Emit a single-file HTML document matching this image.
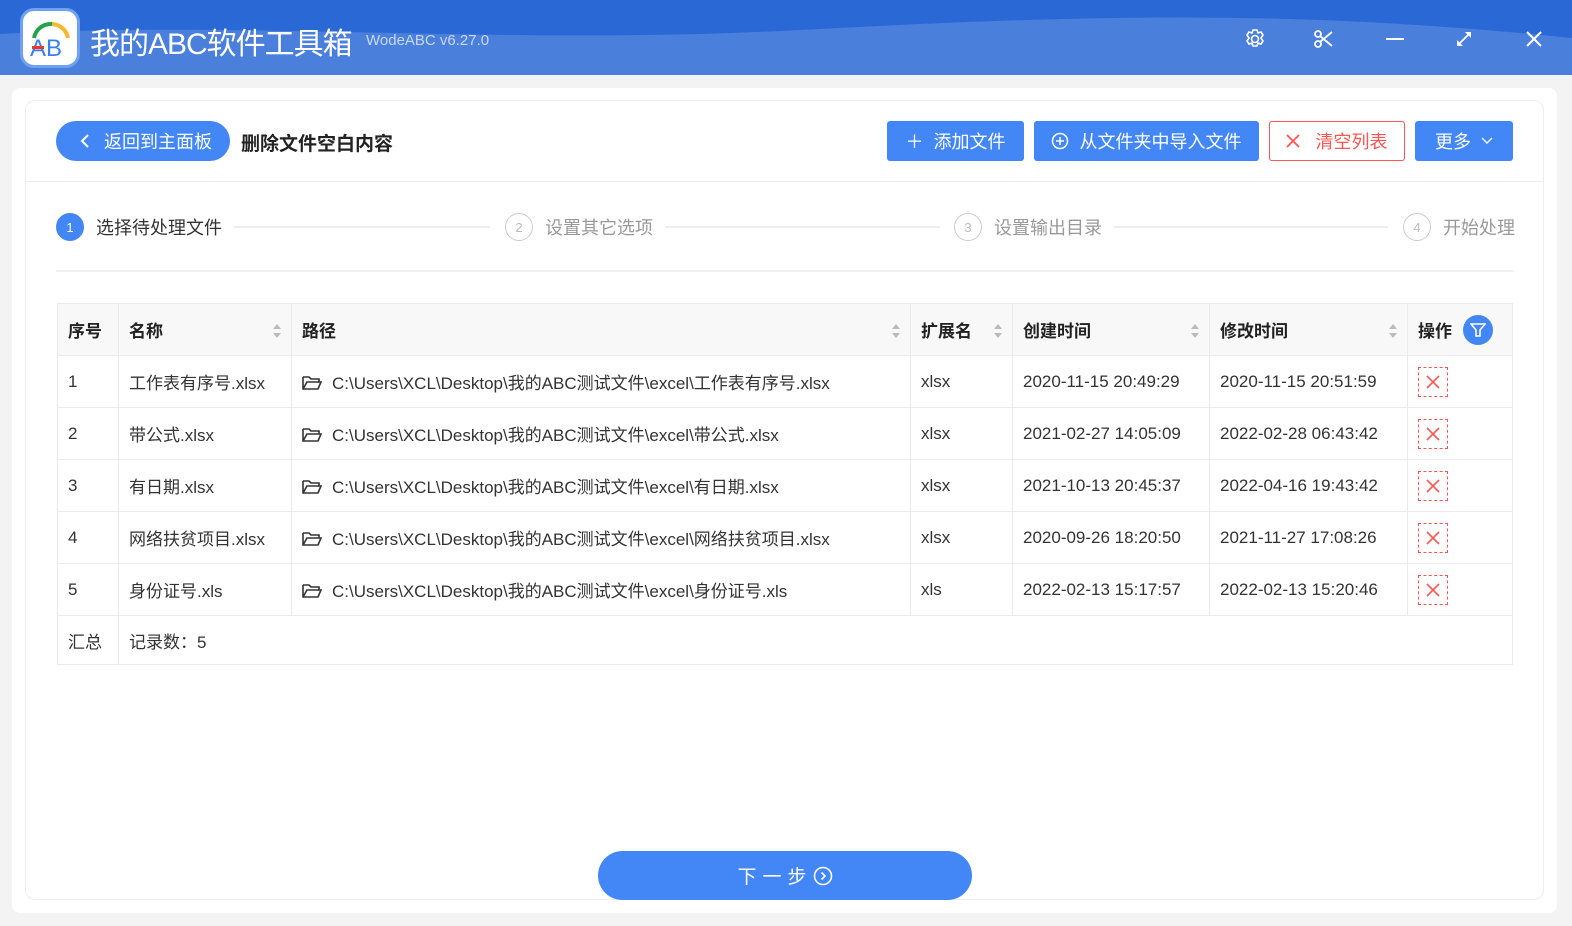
<!DOCTYPE html>
<html><head><meta charset="utf-8"><style>
*{margin:0;padding:0;box-sizing:border-box}
body{width:1572px;height:926px;background:#f3f3f3;font-family:"Liberation Sans","Noto Sans CJK SC",sans-serif;position:relative;overflow:hidden;color:#333}
.a{position:absolute}
.hdr{left:0;top:0;width:1572px;height:75px;background:#4a7fdc;overflow:hidden}
.btn{position:absolute;top:121px;height:40px;background:#4287f5;color:#fff;font-size:18px;display:flex;align-items:center;justify-content:center;border-radius:3px}
.step{font-size:18px;color:#999;top:213px;display:flex;align-items:center;height:28px}
.circ{width:28px;height:28px;border-radius:50%;border:1.5px solid #ccc;color:#bbb;font-size:13px;display:flex;align-items:center;justify-content:center;margin-right:12px}
.line{height:2px;background:#eee;top:226px}
table{position:absolute;left:57px;top:303px;border-collapse:collapse;font-size:17px;width:1456px}
td,th{border:1px solid #ebebeb;padding:0 10px;text-align:left;white-space:nowrap}
th{height:52px;background:#f8f8f8;font-weight:bold;color:#222;position:relative}
td{height:52px;color:#333}
.sort{position:absolute;right:10px;top:19px;width:8px}
.del{width:30px;height:30px;border:1.5px dashed #f55;display:flex;align-items:center;justify-content:center}
</style></head><body>
<div class="a hdr">
 <svg class="a" style="left:0;top:0" width="1572" height="75"><path d="M0 0H1572V38C1300 10 1100 14 800 30 500 46 250 20 0 34Z" fill="#2a68d5"/></svg>
 <div class="a" style="left:20px;top:8px;width:60px;height:60px;border-radius:14px;background:#fff;border:3px solid #6ea2f0"></div>
 <svg class="a" style="left:26px;top:16px" width="50" height="44"><path d="M8 22A17 17 0 0 1 26 8" stroke="#22a34b" stroke-width="4" fill="none"/><path d="M26 8A17 17 0 0 1 42 22" stroke="#f5b82e" stroke-width="4" fill="none"/><text x="4" y="40" font-size="24" font-family="Liberation Sans" fill="#3a80f0">AB</text><rect x="6" y="30" width="12" height="3" fill="#e33"/></svg>
 <div class="a" style="left:90px;top:19px;font-size:30px;color:#fff;letter-spacing:-1px;white-space:nowrap">我的ABC软件工具箱</div>
 <div class="a" style="left:366px;top:32px;font-size:15px;color:#c8d8f5">WodeABC v6.27.0</div>
 <svg class="a" style="left:1244px;top:28px" width="22" height="22" fill="none" stroke="#fff" stroke-width="1.6"><circle cx="11" cy="11" r="3.5"/><path d="M9 2h4l1 3 3-1 2 3-2 3 2 3-2 3-3-1-1 3H9l-1-3-3 1-2-3 2-3-2-3 2-3 3 1z"/></svg>
 <svg class="a" style="left:1314px;top:29px" width="20" height="20" fill="none" stroke="#fff" stroke-width="1.8"><circle cx="4" cy="5" r="3"/><circle cx="4" cy="15" r="3"/><path d="M6 7L18 17M6 13L18 3"/></svg>
 <div class="a" style="left:1386px;top:38px;width:18px;height:2px;background:#fff"></div>
 <svg class="a" style="left:1455px;top:30px" width="18" height="18" stroke="#fff" stroke-width="1.8" fill="#fff"><path d="M3 15L15 3"/><path d="M10 2h6v6z M2 10v6h6z" stroke="none"/></svg>
 <svg class="a" style="left:1526px;top:31px" width="16" height="16" stroke="#fff" stroke-width="2"><path d="M1 1L15 15M15 1L1 15"/></svg>
</div>
<div class="a" style="left:12px;top:88px;width:1545px;height:825px;background:#fff;border-radius:8px"></div>
<div class="a" style="left:25px;top:100px;width:1519px;height:800px;border:1px solid #eee;border-radius:10px"></div>
<div class="a" style="left:25px;top:181px;width:1519px;height:1px;background:#eee"></div>
<div class="a" style="left:56px;top:121px;width:174px;height:40px;background:#4287f5;border-radius:20px;color:#fff;font-size:18px;display:flex;align-items:center;padding-left:22px"><svg width="14" height="16" fill="none" stroke="#fff" stroke-width="2"><path d="M10 2L4 8l6 6"/></svg><span style="margin-left:12px">返回到主面板</span></div>
<div class="a" style="left:241px;top:129px;font-size:19px;font-weight:bold;color:#222">删除文件空白内容</div>
<div class="btn" style="left:887px;width:137px">＋&nbsp; 添加文件</div>
<div class="btn" style="left:1034px;width:225px"><svg width="18" height="18" fill="none" stroke="#fff" stroke-width="1.5"><circle cx="9" cy="9" r="7.5"/><path d="M9 5v8M5 9h8"/></svg>&nbsp; 从文件夹中导入文件</div>
<div class="btn" style="left:1269px;width:136px;background:#fff;border:1.5px solid #f55;color:#f55"><svg width="14" height="14" stroke="#f55" stroke-width="1.8"><path d="M1 1l12 12M13 1L1 13"/></svg>&nbsp;&nbsp; 清空列表</div>
<div class="btn" style="left:1415px;width:98px">更多&nbsp;&nbsp;<svg width="12" height="8" fill="none" stroke="#fff" stroke-width="1.4"><path d="M1 1l5 5 5-5"/></svg></div>
<div class="a step" style="left:56px;color:#333"><div class="circ" style="background:#4287f5;border-color:#4287f5;color:#fff">1</div>选择待处理文件</div>
<div class="a line" style="left:234px;width:256px"></div>
<div class="a step" style="left:505px"><div class="circ">2</div>设置其它选项</div>
<div class="a line" style="left:665px;width:275px"></div>
<div class="a step" style="left:954px"><div class="circ">3</div>设置输出目录</div>
<div class="a line" style="left:1114px;width:274px"></div>
<div class="a step" style="left:1403px"><div class="circ">4</div>开始处理</div>
<div class="a" style="left:56px;top:270px;width:1458px;height:2px;background:#f0f0f0"></div>
<table>
<tr><th style="width:61px">序号</th><th style="width:173px">名称<svg class="sort" height="16"><path d="M0 6l4-5 4 5zM0 10l4 5 4-5z" fill="#bbb"/></svg></th><th style="width:619px">路径<svg class="sort" height="16"><path d="M0 6l4-5 4 5zM0 10l4 5 4-5z" fill="#bbb"/></svg></th><th style="width:102px">扩展名<svg class="sort" height="16"><path d="M0 6l4-5 4 5zM0 10l4 5 4-5z" fill="#bbb"/></svg></th><th style="width:197px">创建时间<svg class="sort" height="16"><path d="M0 6l4-5 4 5zM0 10l4 5 4-5z" fill="#bbb"/></svg></th><th style="width:198px">修改时间<svg class="sort" height="16"><path d="M0 6l4-5 4 5zM0 10l4 5 4-5z" fill="#bbb"/></svg></th><th>操作<span style="position:absolute;left:55px;top:11px;width:30px;height:30px;border-radius:50%;background:#4287f5;display:flex;align-items:center;justify-content:center"><svg width="16" height="16" fill="none" stroke="#fff" stroke-width="1.6"><path d="M1 2h14L10 8v6H6V8z"/></svg></span></th></tr>
<tr><td>1</td><td>工作表有序号.xlsx</td><td><svg width="20" height="16" fill="none" stroke="#333" stroke-width="1.6" style="vertical-align:-2px;margin-right:10px"><path d="M1 2h6l2 2h8v3M1 2v12h15l3-7H5L1 14"/></svg>C:\Users\XCL\Desktop\我的ABC测试文件\excel\工作表有序号.xlsx</td><td>xlsx</td><td>2020-11-15 20:49:29</td><td>2020-11-15 20:51:59</td><td><div class="del"><svg width="14" height="14" stroke="#f55" stroke-width="1.6"><path d="M1 1l12 12M13 1L1 13"/></svg></div></td></tr>
<tr><td>2</td><td>带公式.xlsx</td><td><svg width="20" height="16" fill="none" stroke="#333" stroke-width="1.6" style="vertical-align:-2px;margin-right:10px"><path d="M1 2h6l2 2h8v3M1 2v12h15l3-7H5L1 14"/></svg>C:\Users\XCL\Desktop\我的ABC测试文件\excel\带公式.xlsx</td><td>xlsx</td><td>2021-02-27 14:05:09</td><td>2022-02-28 06:43:42</td><td><div class="del"><svg width="14" height="14" stroke="#f55" stroke-width="1.6"><path d="M1 1l12 12M13 1L1 13"/></svg></div></td></tr>
<tr><td>3</td><td>有日期.xlsx</td><td><svg width="20" height="16" fill="none" stroke="#333" stroke-width="1.6" style="vertical-align:-2px;margin-right:10px"><path d="M1 2h6l2 2h8v3M1 2v12h15l3-7H5L1 14"/></svg>C:\Users\XCL\Desktop\我的ABC测试文件\excel\有日期.xlsx</td><td>xlsx</td><td>2021-10-13 20:45:37</td><td>2022-04-16 19:43:42</td><td><div class="del"><svg width="14" height="14" stroke="#f55" stroke-width="1.6"><path d="M1 1l12 12M13 1L1 13"/></svg></div></td></tr>
<tr><td>4</td><td>网络扶贫项目.xlsx</td><td><svg width="20" height="16" fill="none" stroke="#333" stroke-width="1.6" style="vertical-align:-2px;margin-right:10px"><path d="M1 2h6l2 2h8v3M1 2v12h15l3-7H5L1 14"/></svg>C:\Users\XCL\Desktop\我的ABC测试文件\excel\网络扶贫项目.xlsx</td><td>xlsx</td><td>2020-09-26 18:20:50</td><td>2021-11-27 17:08:26</td><td><div class="del"><svg width="14" height="14" stroke="#f55" stroke-width="1.6"><path d="M1 1l12 12M13 1L1 13"/></svg></div></td></tr>
<tr><td>5</td><td>身份证号.xls</td><td><svg width="20" height="16" fill="none" stroke="#333" stroke-width="1.6" style="vertical-align:-2px;margin-right:10px"><path d="M1 2h6l2 2h8v3M1 2v12h15l3-7H5L1 14"/></svg>C:\Users\XCL\Desktop\我的ABC测试文件\excel\身份证号.xls</td><td>xls</td><td>2022-02-13 15:17:57</td><td>2022-02-13 15:20:46</td><td><div class="del"><svg width="14" height="14" stroke="#f55" stroke-width="1.6"><path d="M1 1l12 12M13 1L1 13"/></svg></div></td></tr>
<tr><td style="height:49px">汇总</td><td colspan="6" style="height:49px">记录数：5</td></tr>
</table>
<div class="a" style="left:598px;top:851px;width:374px;height:49px;border-radius:25px;background:#4287f5;color:#fff;font-size:19px;display:flex;align-items:center;justify-content:center;letter-spacing:6px">下一步 <svg width="20" height="20" fill="none" stroke="#fff" stroke-width="1.6"><circle cx="10" cy="10" r="8.5"/><path d="M8.5 6.5L12 10l-3.5 3.5"/></svg></div>
</body></html>
